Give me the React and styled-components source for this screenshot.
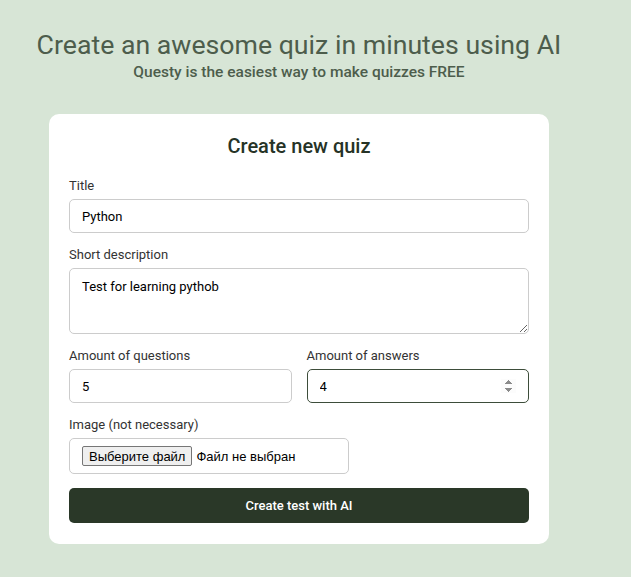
import styled, { createGlobalStyle } from 'styled-components'

const GlobalStyle = createGlobalStyle`
    html, body {
        margin: 0;
        background: #d7e5d6;
        font-family: Roboto, "Noto Sans", sans-serif;
    }
`

const Field = ({ label, children }) => (
    <FieldGroup>
        <Label>{label}</Label>
        {children}
    </FieldGroup>
)

const App = () => {
    return (
        <>
            <GlobalStyle />
            <Page>
                <Header>
                    <Title>Create an awesome quiz in minutes using AI</Title>
                    <Subtitle>Questy is the easiest way to make quizzes FREE</Subtitle>
                </Header>
                <Card>
                    <CardHeading>Create new quiz</CardHeading>
                    <Field label="Title">
                        <Input defaultValue="Python" />
                    </Field>
                    <Field label="Short description">
                        <TextArea defaultValue="Test for learning pythob" />
                    </Field>
                    <Row>
                        <Field label="Amount of questions">
                            <Input type="number" defaultValue="5" />
                        </Field>
                        <Field label="Amount of answers">
                            <Input type="number" defaultValue="4" active autoFocus />
                        </Field>
                    </Row>
                    <Field label="Image (not necessary)">
                        <FileBox>
                            <FileButton>Выберите файл</FileButton>
                            <FileName>Файл не выбран</FileName>
                        </FileBox>
                    </Field>
                    <SubmitButton>Create test with AI</SubmitButton>
                </Card>
            </Page>
        </>
    )
}

const Page = styled.div`
    width: 598px;
    display: flex;
    flex-direction: column;
    align-items: center;
    padding-top: 30px;
`

const Header = styled.div`
    display: flex;
    flex-direction: column;
    align-items: center;
    color: #4d5d4c;
    white-space: nowrap;
`

const Title = styled.h1`
    margin: 0;
    font-size: 26.7px;
    line-height: 30px;
    font-weight: 400;
`

const Subtitle = styled.p`
    margin: 2px 0 0;
    font-size: 15.5px;
    line-height: 20px;
    font-weight: 500;
`

const Card = styled.form`
    box-sizing: border-box;
    width: 500px;
    margin-top: 32px;
    padding: 20px 20px 21px;
    background: #fff;
    border-radius: 10px;
    display: flex;
    flex-direction: column;
    gap: 14px;
`

const CardHeading = styled.h2`
    margin: 0 0 6px;
    text-align: center;
    font-size: 20px;
    line-height: 24px;
    font-weight: 500;
    color: #263326;
`

const FieldGroup = styled.div`
    display: flex;
    flex-direction: column;
    gap: 5px;
    min-width: 0;
`

const Label = styled.label`
    font-size: 13px;
    line-height: 16px;
    color: #333;
`

const Row = styled.div`
    display: grid;
    grid-template-columns: 1fr 1fr;
    gap: 15px;
`

const Input = styled.input`
    box-sizing: border-box;
    width: 100%;
    height: 34px;
    padding: 0 12px;
    border: 1px solid ${({ active }) => (active ? '#3d4d3a' : '#cccccc')};
    border-radius: 5px;
    font-family: Roboto, sans-serif;
    font-size: 13px;
    color: #000;
    outline: none;
`

const TextArea = styled.textarea`
    box-sizing: border-box;
    width: 100%;
    height: 66px;
    padding: 10px 12px;
    border: 1px solid #cccccc;
    border-radius: 5px;
    font-family: Roboto, sans-serif;
    font-size: 13px;
    color: #000;
    outline: none;
`

const FileBox = styled.div`
    box-sizing: border-box;
    width: 280px;
    height: 36px;
    padding: 0 12px;
    border: 1px solid #cccccc;
    border-radius: 5px;
    display: flex;
    align-items: center;
    gap: 4px;
    font-family: "Liberation Sans", Arial, sans-serif;
    font-size: 13px;
`

const FileButton = styled.span`
    box-sizing: border-box;
    height: 20px;
    padding: 0 6px;
    display: flex;
    align-items: center;
    background: #efefef;
    border: 1px solid #767676;
    border-radius: 2px;
    color: #000;
`

const FileName = styled.span`
    color: #000;
`

const SubmitButton = styled.button`
    height: 35px;
    border: none;
    border-radius: 5px;
    background: #2a3828;
    color: #fff;
    font-family: Roboto, sans-serif;
    font-size: 13px;
    font-weight: 500;
    cursor: pointer;
`

export default App
